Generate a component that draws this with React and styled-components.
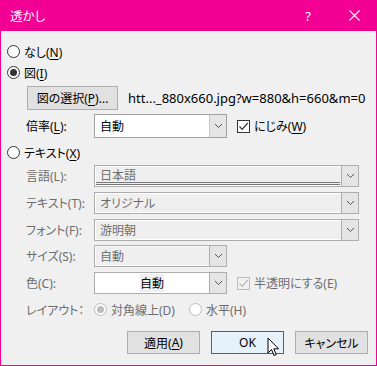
import React from 'react';
import styled, { createGlobalStyle } from 'styled-components';

const GlobalStyle = createGlobalStyle`
  html, body {
    margin: 0;
    padding: 0;
    background: #f0f0f0;
  }
  body {
    font-family: "Noto Sans", "Noto Sans CJK JP", sans-serif;
    font-size: 12px;
    font-feature-settings: "palt";
  }
`;

const Window = styled.div`
  position: relative;
  width: 377px;
  height: 366px;
  box-sizing: border-box;
  border: 1px solid #f20094;
  border-top: none;
  background: #f0f0f0;
  display: flex;
  flex-direction: column;
`;

const TitleBar = styled.div`
  height: 31px;
  margin: 0 -1px;
  background: #f20094;
  color: #fff;
  display: flex;
  align-items: center;
  padding-left: 10px;
  font-size: 12.5px;
`;

const Title = styled.div`
  flex: 1;
`;

const TitleButton = styled.div`
  width: 46px;
  height: 31px;
  display: flex;
  align-items: center;
  justify-content: center;
  font-size: 13px;
`;

const Body = styled.div`
  display: flex;
  flex-direction: column;
  padding: 10px 7px 0 6px;
`;

const Row = styled.div`
  display: flex;
  align-items: center;
  height: ${p => p.h || 21}px;
  margin-top: ${p => p.mt || 0}px;
  padding-left: ${p => p.indent || 0}px;
`;

const Option = styled.label`
  display: flex;
  align-items: center;
  gap: 4px;
  white-space: nowrap;
  color: ${p => (p.disabled ? '#6d6d6d' : '#000')};
  margin-right: ${p => p.mr || 0}px;
`;

const RadioDot = styled.span`
  width: 13px;
  height: 13px;
  box-sizing: border-box;
  border-radius: 50%;
  border: 1px solid ${p => (p.disabled ? '#bcbcbc' : '#333')};
  background: #fff;
  display: flex;
  align-items: center;
  justify-content: center;
  &::after {
    content: "";
    display: ${p => (p.checked ? 'block' : 'none')};
    width: 7px;
    height: 7px;
    border-radius: 50%;
    background: ${p => (p.disabled ? '#bcbcbc' : '#333')};
  }
`;

const Box = styled.span`
  width: 13px;
  height: 13px;
  box-sizing: border-box;
  border: 1px solid ${p => (p.disabled ? '#bcbcbc' : '#333')};
  background: ${p => (p.disabled ? '#f0f0f0' : '#fff')};
  display: flex;
  align-items: center;
  justify-content: center;
`;

const Key = styled.span`
  text-decoration: underline;
  text-underline-offset: 2px;
`;

const Label = styled.div`
  width: 87px;
  box-sizing: border-box;
  padding-left: 19px;
  flex: none;
  white-space: nowrap;
  color: ${p => (p.disabled ? '#6d6d6d' : '#000')};
`;

const Button = styled.div`
  width: ${p => p.w || 73}px;
  height: ${p => p.h || 23}px;
  box-sizing: border-box;
  border: 1px solid ${p => (p.primary ? '#0078d7' : '#adadad')};
  background: ${p => (p.primary ? '#e5f1fb' : '#e1e1e1')};
  display: flex;
  align-items: center;
  justify-content: center;
  color: #000;
`;

const FileName = styled.div`
  margin-left: 10px;
  white-space: nowrap;
  font-size: 13px;
`;

const Combo = styled.div`
  width: ${p => p.w}px;
  height: ${p => p.h || 22}px;
  box-sizing: border-box;
  border: 1px solid ${p => (p.enabled ? '#a0a0a0' : '#adadad')};
  background: ${p => (p.white || p.enabled ? '#fff' : '#efefef')};
  box-shadow: ${p => (p.enabled ? 'none' : 'inset 0 0 0 1px #fff')};
  display: flex;
  margin-right: 10px;
  color: ${p => (p.enabled ? '#000' : '#6d6d6d')};
`;

const ComboValue = styled.div`
  flex: 1;
  display: flex;
  align-items: center;
  justify-content: ${p => (p.center ? 'center' : 'flex-start')};
  padding-left: ${p => (p.center ? 0 : 4)}px;
  margin: 2px 1px 2px 1px;
  ${p => p.underline && 'border-bottom: 3px double #777; margin-bottom: 1px;'}
`;

const Highlight = styled.span`
  background: #f0f0f0;
  color: #000;
`;

const Arrow = styled.div`
  width: 16px;
  flex: none;
  border-left: 1px solid ${p => (p.enabled ? '#c8c8c8' : '#adadad')};
  background: #e5e5e5;
  display: flex;
  align-items: center;
  justify-content: center;
`;

const Footer = styled.div`
  display: flex;
  justify-content: flex-end;
  gap: 11px;
  margin-top: 11px;
  padding-right: 1px;
`;

const Cursor = styled.svg`
  position: absolute;
  left: 266px;
  top: 337px;
`;

const Chevron = () => (
  <svg width="9" height="6" viewBox="0 0 9 6">
    <path d="M1 1 L4.5 4.5 L8 1" fill="none" stroke="#555" strokeWidth="1" />
  </svg>
);

const Check = ({ color }) => (
  <svg width="11" height="11" viewBox="0 0 11 11">
    <path d="M1.5 5.5 L4.2 8.3 L9.7 2" fill="none" stroke={color} strokeWidth="1.2" />
  </svg>
);

const Radio = ({ checked, disabled, children, mr }) => (
  <Option disabled={disabled} mr={mr}>
    <RadioDot checked={checked} disabled={disabled} />
    <span>{children}</span>
  </Option>
);

const Select = ({ w, h, value, enabled, white, center, underline }) => (
  <Combo w={w} h={h} enabled={enabled} white={white}>
    <ComboValue center={center} underline={underline}>{value}</ComboValue>
    <Arrow enabled={enabled}><Chevron /></Arrow>
  </Combo>
);

const App = () => (
  <>
    <GlobalStyle />
    <Window>
      <TitleBar>
        <Title>透かし</Title>
        <TitleButton>?</TitleButton>
        <TitleButton>
          <svg width="11" height="11" viewBox="0 0 11 11">
            <path d="M0.5 0.5 L10.5 10.5 M10.5 0.5 L0.5 10.5" stroke="#fff" strokeWidth="1.1" />
          </svg>
        </TitleButton>
      </TitleBar>
      <Body>
        <Row>
          <Radio>なし(<Key>N</Key>)</Radio>
        </Row>
        <Row>
          <Radio checked>図(<Key>I</Key>)</Radio>
        </Row>
        <Row h={24} mt={3} indent={20}>
          <Button w={91} h={24}>図の選択(<Key>P</Key>)...</Button>
          <FileName>htt..._880x660.jpg?w=880&amp;h=660&amp;m=0</FileName>
        </Row>
        <Row h={24} mt={4}>
          <Label>倍率(<Key>L</Key>):</Label>
          <Select w={133} h={24} value="自動" enabled />
          <Option>
            <Box><Check color="#333" /></Box>
            <span>にじみ(<Key>W</Key>)</span>
          </Option>
        </Row>
        <Row mt={4}>
          <Radio>テキスト(<Key>X</Key>)</Radio>
        </Row>
        <Row h={22} mt={2}>
          <Label disabled>言語(L):</Label>
          <Select w={276} value="日本語" underline />
        </Row>
        <Row h={22} mt={5}>
          <Label disabled>テキスト(T):</Label>
          <Select w={276} value="オリジナル" />
        </Row>
        <Row h={22} mt={5}>
          <Label disabled>フォント(F):</Label>
          <Select w={276} value="游明朝" />
        </Row>
        <Row h={22} mt={4}>
          <Label disabled>サイズ(S):</Label>
          <Select w={133} value="自動" />
        </Row>
        <Row h={22} mt={5}>
          <Label disabled>色(C):</Label>
          <Select w={133} value={<Highlight>自動</Highlight>} white center />
          <Option disabled>
            <Box disabled><Check color="#bcbcbc" /></Box>
            <span>半透明にする(E)</span>
          </Option>
        </Row>
        <Row mt={5}>
          <Label disabled>レイアウト：</Label>
          <Radio checked disabled mr={14}>対角線上(D)</Radio>
          <Radio disabled>水平(H)</Radio>
        </Row>
        <Footer>
          <Button>適用(<Key>A</Key>)</Button>
          <Button primary>OK</Button>
          <Button>キャンセル</Button>
        </Footer>
      </Body>
      <Cursor width="14" height="21" viewBox="0 0 14 21">
        <path d="M1 1 L1 16 L4.5 12.5 L7 18.5 L9.2 17.6 L6.8 11.8 L11.5 11.8 Z" fill="#fff" stroke="#000" strokeWidth="1" strokeLinejoin="round" />
      </Cursor>
    </Window>
  </>
);

export default App;
